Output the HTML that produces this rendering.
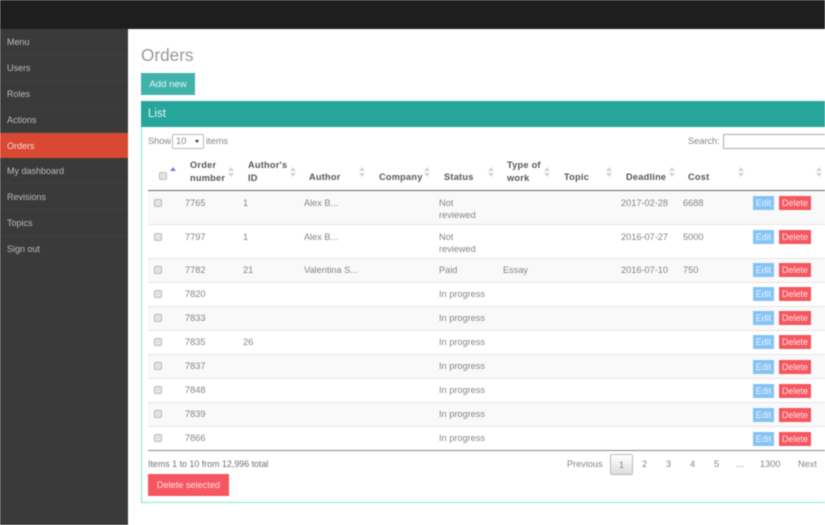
<!DOCTYPE html>
<html><head><meta charset="utf-8"><title>Orders</title>
<style>
html,body{margin:0;padding:0;background:#fff}
#p{position:relative;width:825px;height:525px;overflow:hidden;background:#fff;font-family:"Liberation Sans",sans-serif;font-size:9.2px;color:#858585;filter:blur(.5px)}
#p div,#p span{position:absolute;white-space:nowrap}
.n{left:0;width:128px;height:26px;border-bottom:1px solid #404040;box-sizing:border-box;color:#bbb;font-size:9px;line-height:27px;text-indent:7px}
.r{left:148px;width:677px}
.o{background:#f9f9f9}
.l{left:148px;width:677px;height:1px;background:#e6e6e6}
.t{line-height:12px;height:12px}
.h{font-weight:bold;color:#555;line-height:12.5px;font-size:9.2px;letter-spacing:.25px}
.c{left:154px;width:6px;height:6px;border:1px solid #bbb;border-radius:2px;background:#e4e4e4}
.e{left:753px;width:21px;height:14px;background:#86c3f5;color:#e8f3fc;font-size:9px;line-height:15px;text-align:center}
.d{left:779px;width:32px;height:14px;background:#f6565f;color:#fde3e4;font-size:9px;line-height:15px;text-align:center}
.u{width:0;height:0;border-left:3px solid transparent;border-right:3px solid transparent;border-bottom:4px solid #d4d4d4}
.w{width:0;height:0;border-left:3px solid transparent;border-right:3px solid transparent;border-top:4px solid #d4d4d4}
.g{color:#858585;top:459px;line-height:11px}
</style></head><body><div id="p">
<div style="left:0;top:0;width:825px;height:29px;background:#1e1e1e"></div>
<div style="left:0;top:29px;width:128px;height:496px;background:#3a3a3a"></div>
<div class="n" style="top:29px">Menu</div>
<div class="n" style="top:55px">Users</div>
<div class="n" style="top:81px">Roles</div>
<div class="n" style="top:107px">Actions</div>
<div class="n" style="top:133px;height:25px;background:#d84832;color:#f8dcd6;border:0;line-height:26px">Orders</div>
<div class="n" style="top:158px">My dashboard</div>
<div class="n" style="top:184px">Revisions</div>
<div class="n" style="top:210px">Topics</div>
<div class="n" style="top:236px;border:0">Sign out</div>

<div style="left:141px;top:44px;font-size:17.2px;line-height:23px;color:#999">Orders</div>
<div style="left:141px;top:73px;width:54px;height:22px;background:#42b3ab;color:#e8f6f5;font-size:9.6px;line-height:23px;text-align:center">Add new</div>

<div style="left:141px;top:101px;width:690px;height:402px;box-sizing:border-box;border:1px solid #7fe8d6"></div>
<div style="left:141px;top:101px;width:684px;height:26px;background:#26a69a"></div>
<div style="left:148px;top:107px;font-size:11.5px;line-height:15px;color:#e9f6f5">List</div>

<div class="t" style="left:148px;top:135px">Show</div>
<div style="left:172px;top:134px;width:30px;height:13px;border:1px solid #bbb;border-radius:2px;line-height:13px;text-indent:3px">10</div>
<div style="left:195px;top:140px;width:0;height:0;border-left:2.5px solid transparent;border-right:2.5px solid transparent;border-top:3.5px solid #333"></div>
<div class="t" style="left:206px;top:135px">items</div>
<div class="t" style="left:688px;top:135px">Search:</div>
<div style="left:723px;top:134px;width:110px;height:13px;border:1px solid #aaa;border-radius:1px"></div>

<div class="c" style="left:159px;top:172px"></div>
<div style="left:170px;top:167px;width:0;height:0;border-left:3px solid transparent;border-right:3px solid transparent;border-bottom:4px solid #7a7ae0"></div>
<div class="h" style="left:190px;top:159px">Order<br>number</div>
<div class="u" style="left:228px;top:167px"></div><div class="w" style="left:228px;top:173px"></div>
<div class="h" style="left:248px;top:159px">Author's<br>ID</div>
<div class="u" style="left:290px;top:167px"></div><div class="w" style="left:290px;top:173px"></div>
<div class="h" style="left:309px;top:171px">Author</div>
<div class="u" style="left:359px;top:167px"></div><div class="w" style="left:359px;top:173px"></div>
<div class="h" style="left:379px;top:171px">Company</div>
<div class="u" style="left:424px;top:167px"></div><div class="w" style="left:424px;top:173px"></div>
<div class="h" style="left:444px;top:171px">Status</div>
<div class="u" style="left:488px;top:167px"></div><div class="w" style="left:488px;top:173px"></div>
<div class="h" style="left:507px;top:159px">Type of<br>work</div>
<div class="u" style="left:544px;top:167px"></div><div class="w" style="left:544px;top:173px"></div>
<div class="h" style="left:564px;top:171px">Topic</div>
<div class="u" style="left:606px;top:167px"></div><div class="w" style="left:606px;top:173px"></div>
<div class="h" style="left:626px;top:171px">Deadline</div>
<div class="u" style="left:669px;top:167px"></div><div class="w" style="left:669px;top:173px"></div>
<div class="h" style="left:688px;top:171px">Cost</div>
<div class="u" style="left:738px;top:167px"></div><div class="w" style="left:738px;top:173px"></div>
<div class="u" style="left:816px;top:167px"></div><div class="w" style="left:816px;top:173px"></div>

<div class="r" style="top:190px;height:1px;background:#666"></div>
<div class="r o" style="top:191px;height:33px"></div>
<div class="r o" style="top:259px;height:23px"></div>
<div class="r o" style="top:307px;height:23px"></div>
<div class="r o" style="top:355px;height:23px"></div>
<div class="r o" style="top:403px;height:23px"></div>
<div class="l" style="top:224px"></div><div class="l" style="top:258px"></div><div class="l" style="top:282px"></div><div class="l" style="top:306px"></div><div class="l" style="top:330px"></div><div class="l" style="top:354px"></div><div class="l" style="top:378px"></div><div class="l" style="top:402px"></div><div class="l" style="top:426px"></div>
<div class="r" style="top:450px;height:1px;background:#888"></div>

<div class="c" style="top:199px"></div><div class="t" style="left:185px;top:197px">7765</div><div class="t" style="left:243px;top:197px">1</div><div class="t" style="left:304px;top:197px">Alex B...</div><div class="t" style="left:439px;top:197px">Not</div><div class="t" style="left:439px;top:209px">reviewed</div><div class="t" style="left:621px;top:197px">2017-02-28</div><div class="t" style="left:683px;top:197px">6688</div><div class="e" style="top:196px">Edit</div><div class="d" style="top:196px">Delete</div>

<div class="c" style="top:233px"></div><div class="t" style="left:185px;top:231px">7797</div><div class="t" style="left:243px;top:231px">1</div><div class="t" style="left:304px;top:231px">Alex B...</div><div class="t" style="left:439px;top:231px">Not</div><div class="t" style="left:439px;top:243px">reviewed</div><div class="t" style="left:621px;top:231px">2016-07-27</div><div class="t" style="left:683px;top:231px">5000</div><div class="e" style="top:230px">Edit</div><div class="d" style="top:230px">Delete</div>

<div class="c" style="top:266px"></div><div class="t" style="left:185px;top:264px">7782</div><div class="t" style="left:243px;top:264px">21</div><div class="t" style="left:304px;top:264px">Valentina S...</div><div class="t" style="left:439px;top:264px">Paid</div><div class="t" style="left:503px;top:264px">Essay</div><div class="t" style="left:621px;top:264px">2016-07-10</div><div class="t" style="left:683px;top:264px">750</div><div class="e" style="top:263px">Edit</div><div class="d" style="top:263px">Delete</div>

<div class="c" style="top:290px"></div><div class="t" style="left:185px;top:288px">7820</div><div class="t" style="left:439px;top:288px">In progress</div><div class="e" style="top:287px">Edit</div><div class="d" style="top:287px">Delete</div>

<div class="c" style="top:314px"></div><div class="t" style="left:185px;top:312px">7833</div><div class="t" style="left:439px;top:312px">In progress</div><div class="e" style="top:311px">Edit</div><div class="d" style="top:311px">Delete</div>

<div class="c" style="top:338px"></div><div class="t" style="left:185px;top:336px">7835</div><div class="t" style="left:243px;top:336px">26</div><div class="t" style="left:439px;top:336px">In progress</div><div class="e" style="top:335px">Edit</div><div class="d" style="top:335px">Delete</div>

<div class="c" style="top:362px"></div><div class="t" style="left:185px;top:360px">7837</div><div class="t" style="left:439px;top:360px">In progress</div><div class="e" style="top:360px">Edit</div><div class="d" style="top:360px">Delete</div>

<div class="c" style="top:386px"></div><div class="t" style="left:185px;top:384px">7848</div><div class="t" style="left:439px;top:384px">In progress</div><div class="e" style="top:384px">Edit</div><div class="d" style="top:384px">Delete</div>

<div class="c" style="top:410px"></div><div class="t" style="left:185px;top:408px">7839</div><div class="t" style="left:439px;top:408px">In progress</div><div class="e" style="top:408px">Edit</div><div class="d" style="top:408px">Delete</div>

<div class="c" style="top:434px"></div><div class="t" style="left:185px;top:432px">7866</div><div class="t" style="left:439px;top:432px">In progress</div><div class="e" style="top:432px">Edit</div><div class="d" style="top:432px">Delete</div>

<div class="t" style="left:148px;top:458px;color:#707070;font-size:8.9px">Items 1 to 10 from 12,996 total</div>
<div class="g" style="left:567px">Previous</div>
<div style="left:610px;top:454px;width:21px;height:19px;border:1px solid #bbb;border-radius:2px;background:linear-gradient(#fff,#ddd);text-align:center;line-height:20px">1</div>
<div class="g" style="left:642px">2</div>
<div class="g" style="left:666px">3</div>
<div class="g" style="left:690px">4</div>
<div class="g" style="left:714px">5</div>
<div class="g" style="left:736px">...</div>
<div class="g" style="left:760px">1300</div>
<div class="g" style="left:798px">Next</div>
<div style="left:148px;top:474px;width:81px;height:22px;background:#f6565f;color:#fde3e4;font-size:9.2px;line-height:23px;text-align:center">Delete selected</div>
</div></body></html>
